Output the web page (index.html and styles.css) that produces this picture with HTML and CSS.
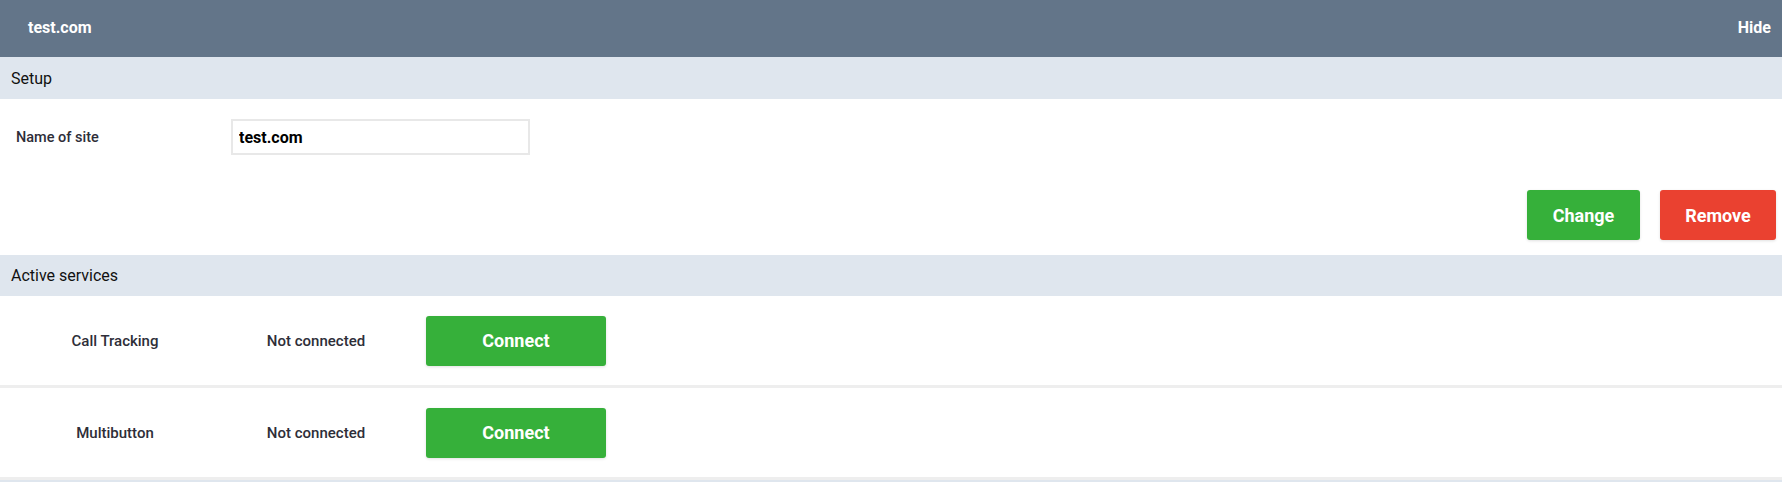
FILE: index.html
```html
<!DOCTYPE html>
<html>
<head>
<meta charset="utf-8">
<link rel="stylesheet" href="styles.css">
</head>
<body>
<div class="topbar">
  <span class="site-title">test.com</span>
  <span class="hide">Hide</span>
</div>
<div class="section-bar">Setup</div>
<div class="setup">
  <div class="form-row">
    <label class="label">Name of site</label>
    <input class="input" type="text" value="test.com">
  </div>
  <div class="actions">
    <button class="btn btn-green btn-change">Change</button>
    <button class="btn btn-red btn-remove">Remove</button>
  </div>
</div>
<div class="section-bar section-bar-sm">Active services</div>
<div class="service">
  <div class="svc-name">Call Tracking</div>
  <div class="svc-status">Not connected</div>
  <button class="btn btn-green btn-connect">Connect</button>
</div>
<div class="service">
  <div class="svc-name">Multibutton</div>
  <div class="svc-status">Not connected</div>
  <button class="btn btn-green btn-connect">Connect</button>
</div>
<div class="section-bar tail"></div>
</body>
</html>
```
FILE: styles.css
```css
* { box-sizing: border-box; }
html, body { margin: 0; padding: 0; background: #fff; }
body {
  font-family: Roboto, "Liberation Sans", sans-serif;
  color: #2e2e38;
}
.topbar {
  height: 57px;
  background: #637589;
  color: #fff;
  display: flex;
  align-items: center;
  justify-content: space-between;
  padding: 0 11px 2px 28px;
  font-weight: 700;
  font-size: 16px;
}
.section-bar {
  height: 42px;
  background: #dfe6ee;
  display: flex;
  align-items: center;
  padding-left: 11px;
  font-size: 16px;
  color: #111;
}
.section-bar-sm { height: 41px; }
.section-bar.tail { height: 5px; }
.setup { padding: 20px 6px 15px 16px; }
.form-row {
  display: flex;
  align-items: center;
}
.label {
  width: 215px;
  font-size: 14.5px;
  font-weight: 500;
  color: #2e2e38;
}
.input {
  width: 299px;
  height: 36px;
  border: 2px solid #e8e8e8;
  padding: 0 6px;
  font-family: inherit;
  font-size: 16px;
  font-weight: 700;
  color: #000;
  outline: none;
}
.actions {
  display: flex;
  justify-content: flex-end;
  gap: 20px;
  margin-top: 35px;
}
.btn {
  height: 50px;
  border: none;
  border-radius: 3px;
  color: #fff;
  font-family: inherit;
  font-size: 18px;
  font-weight: 700;
  box-shadow: 0 1px 3px rgba(0,0,0,0.12);
  cursor: pointer;
}
.btn-green { background: #36b03a; }
.btn-red { background: #ea4130; }
.btn-change { width: 113px; }
.btn-remove { width: 116px; }
.service {
  height: 92px;
  display: flex;
  align-items: center;
  border-bottom: 3px solid #eeeeee;
}
.service:last-of-type { border-bottom: none; height: 89px; }
.svc-name {
  width: 230px;
  text-align: center;
  font-size: 15px;
  font-weight: 500;
}
.svc-status {
  width: 172px;
  text-align: center;
  font-size: 15px;
  font-weight: 500;
}
.btn-connect {
  width: 180px;
  margin-left: 24px;
}
```
